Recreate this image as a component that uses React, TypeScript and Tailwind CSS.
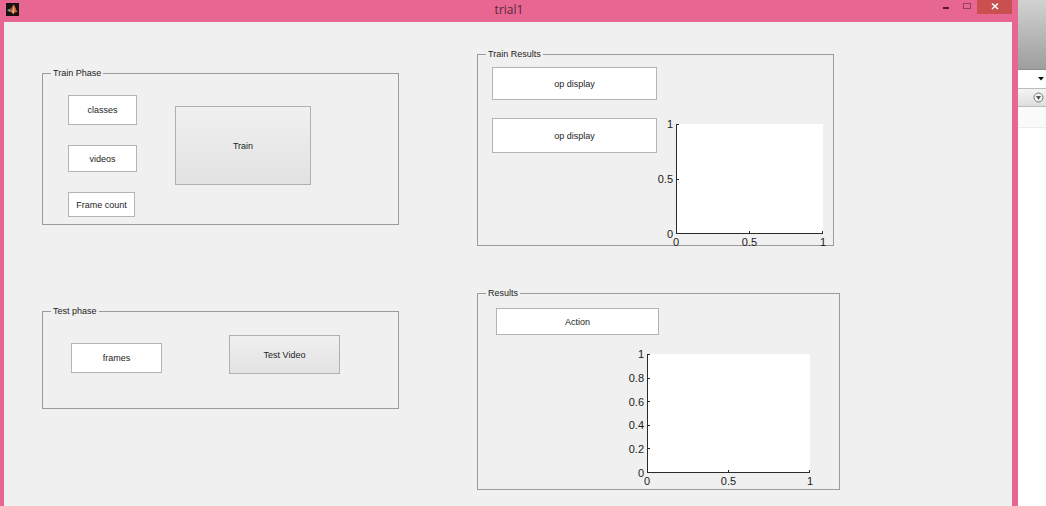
import type { ComponentPropsWithoutRef, ReactNode } from "react";
import clsx from "clsx";

function Panel({
  title,
  className,
  children,
}: {
  title: string;
  className?: string;
  children: ReactNode;
}) {
  return (
    <fieldset className={clsx("border border-[#9b9b9b]", className)}>
      <legend className="ml-2 px-0.5 text-[9px] leading-3">{title}</legend>
      {children}
    </fieldset>
  );
}

function EditBox({
  label,
  className,
  ...props
}: ComponentPropsWithoutRef<"input"> & { label: string }) {
  return (
    <input
      type="text"
      aria-label={label}
      className={clsx(
        "block border border-[#b4b4b4] bg-white text-center text-[9px] outline-none focus:border-[#5a8fc8]",
        className,
      )}
      {...props}
    />
  );
}

function PushButton({ className, children }: { className?: string; children: ReactNode }) {
  return (
    <button
      type="button"
      className={clsx(
        "border border-[#b0b0b0] bg-linear-to-b from-[#f0f0f0] to-[#e2e2e2] pt-0.5 text-center text-[9px] active:to-[#d4d4d4]",
        className,
      )}
    >
      {children}
    </button>
  );
}

// Empty plot: tick labels outside, short tick marks pointing inwards.
function Axes({
  width,
  height,
  xTicks,
  yTicks,
  labelsClassName = "h-4",
  className,
}: {
  width: number;
  height: number;
  xTicks: string[];
  yTicks: string[];
  labelsClassName?: string;
  className?: string;
}) {
  const w = width - 1;
  const h = height - 1;

  return (
    <div className={clsx("grid grid-cols-[auto_auto] gap-x-[3px] text-[11px]", className)}>
      <div className="-my-1.5 flex w-4 flex-col justify-between text-right leading-3">
        {[...yTicks].reverse().map((tick) => (
          <span key={tick}>{tick}</span>
        ))}
      </div>
      <svg width={width} height={height} className="block bg-white" shapeRendering="crispEdges">
        <path d={`M0.5 0V${h + 0.5}H${width}`} fill="none" stroke="#2a2a2a" />
        {xTicks.map((tick) => {
          const x = Math.round(Number(tick) * w) + 0.5;
          return <path key={tick} d={`M${x} ${h}v-2`} stroke="#2a2a2a" />;
        })}
        {yTicks.map((tick) => {
          const y = Math.round((1 - Number(tick)) * h) + 0.5;
          return <path key={tick} d={`M0 ${y}h3`} stroke="#2a2a2a" />;
        })}
      </svg>
      <div className={clsx("col-start-2 flex justify-between leading-4", labelsClassName)}>
        {xTicks.map((tick) => (
          <span key={tick} className="flex w-0 justify-center">
            {tick}
          </span>
        ))}
      </div>
    </div>
  );
}

function MatlabIcon() {
  return (
    <svg width="13" height="13" viewBox="0 0 13 13" aria-hidden="true">
      <rect width="13" height="13" fill="#17100f" />
      <path d="M1 7.2 4 5.8 5.8 7.4 4 9Z" fill="#7fa3aa" />
      <path d="M4 5.8C5.6 5.2 6.4 2.6 7.8 1.6L6.6 7.6 4.6 9.2Z" fill="#9a5238" />
      <path d="M7.8 1.6C9 2.6 9.8 6.6 11.6 9.2 10 8.6 9 9.2 7.2 11.4 6.8 9.8 6 9 4.6 9.2 6.4 7.8 7 4.4 7.8 1.6Z" fill="#d0683c" />
      <path d="M7.8 1.6C8.2 4 8.4 7 7.2 11.4 6.8 9.8 6.4 9.2 5.6 9 7.2 7.4 7.4 4 7.8 1.6Z" fill="#efb682" />
    </svg>
  );
}

function TitleBar() {
  return (
    <header className="flex h-[22px] items-start">
      <div className="flex flex-1 pt-[3px] pl-0.5">
        <MatlabIcon />
      </div>
      <h1 className="font-['Open_Sans','Noto_Sans',sans-serif] text-xs leading-5 text-[#55263a]">
        trial1
      </h1>
      <div className="flex h-3.5 flex-1 justify-end">
        <button type="button" aria-label="Minimize" className="grid w-[21px] place-items-center">
          <svg width="8" height="14" aria-hidden="true">
            <rect x="1" y="7" width="6" height="2" fill="#4d1c2e" />
          </svg>
        </button>
        <button type="button" aria-label="Maximize" className="grid w-[21px] place-items-center">
          <svg width="8" height="14" aria-hidden="true">
            <rect x="0.5" y="3.5" width="7" height="5" fill="none" stroke="#96405f" />
          </svg>
        </button>
        <button
          type="button"
          aria-label="Close"
          className="grid w-[35px] place-items-center bg-[#c9504f]"
        >
          <svg width="8" height="14" aria-hidden="true">
            <path d="M1 3.5l6 5.5M7 3.5l-6 5.5" stroke="#fff" strokeWidth="1.5" />
          </svg>
        </button>
      </div>
    </header>
  );
}

// Edge of the main desktop window showing behind this one.
function DesktopEdge() {
  return (
    <aside className="w-7 shrink-0 bg-white">
      <div className="h-[70px] border-b border-[#8c8c8c] bg-linear-to-b from-[#d2d2d2] to-[#9e9e9e]" />
      <div className="flex h-[18px] items-center justify-end pr-0.5">
        <svg width="6" height="4" aria-hidden="true">
          <path d="M0 0h6L3 3.5Z" fill="#111" />
        </svg>
      </div>
      <div className="flex h-[19px] items-center justify-end border-y border-[#bdbdbd] bg-linear-to-b from-[#f4f4f4] to-[#dedede] pr-0.5">
        <svg width="11" height="11" aria-hidden="true">
          <circle cx="5.5" cy="5.5" r="4.5" fill="#f2f2f2" stroke="#777" />
          <path d="M3 4h5L5.5 8Z" fill="#555" />
        </svg>
      </div>
      <div className="h-[21px] border-b border-[#ececec] bg-[#fafafa]" />
    </aside>
  );
}

export default function App() {
  return (
    <div className="flex min-h-screen bg-white font-['Liberation_Sans',Arial,sans-serif] text-[#1c1c1c]">
      <div className="flex min-w-0 flex-1 flex-col bg-[#e86792] pr-1.5 pl-1">
        <TitleBar />
        <main className="flex flex-1 gap-[78px] bg-[#f0f0f0] pl-[38px]">
          <div className="flex w-[357px] shrink-0 flex-col gap-20 pt-[45px]">
            <Panel title="Train Phase">
              <div className="flex gap-[38px] pt-4 pb-[7px] pl-[25px]">
                <div className="flex flex-col gap-5">
                  <EditBox label="Classes" defaultValue="classes" className="h-[30px] w-[69px]" />
                  <EditBox label="Videos" defaultValue="videos" className="h-[27px] w-[69px]" />
                  <EditBox label="Frame count" defaultValue="Frame count" className="h-[25px] w-[67px]" />
                </div>
                <PushButton className="mt-[11px] h-[79px] w-[136px]">Train</PushButton>
              </div>
            </Panel>

            <Panel title="Test phase">
              <div className="flex gap-[67px] pt-[18px] pb-[34px] pl-7">
                <EditBox label="Frames" defaultValue="frames" className="mt-2 h-[30px] w-[91px]" />
                <PushButton className="h-[39px] w-[111px]">Test Video</PushButton>
              </div>
            </Panel>
          </div>

          <div className="flex w-[363px] shrink-0 flex-col gap-[41px] pt-[26px]">
            <Panel title="Train Results" className="mr-1.5">
              <div className="flex pl-3.5">
                <div className="flex flex-col gap-[18px] pt-[7px]">
                  <EditBox label="Train output 1" defaultValue="op display" className="h-[33px] w-[165px]" />
                  <EditBox label="Train output 2" defaultValue="op display" className="h-[35px] w-[165px]" />
                </div>
                <Axes
                  width={147}
                  height={110}
                  xTicks={["0", "0.5", "1"]}
                  yTicks={["0", "0.5", "1"]}
                  className="pt-16"
                  labelsClassName="h-[11px]"
                />
              </div>
            </Panel>

            <Panel title="Results">
              <div className="flex flex-col gap-[19px] pt-[9px] pl-[18px]">
                <EditBox label="Action" defaultValue="Action" className="h-[27px] w-[163px]" />
                <Axes
                  width={163}
                  height={119}
                  xTicks={["0", "0.5", "1"]}
                  yTicks={["0", "0.2", "0.4", "0.6", "0.8", "1"]}
                  className="ml-[132px] justify-start"
                />
              </div>
            </Panel>
          </div>
        </main>
      </div>
      <DesktopEdge />
    </div>
  );
}
